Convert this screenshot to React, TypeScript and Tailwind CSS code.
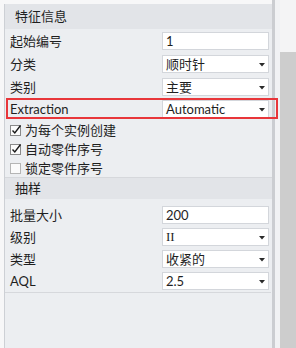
import React from "react";

const FONT = { fontFamily: 'Lato, "Noto Sans CJK SC", sans-serif' };

function Arrow() {
  return (
    <svg width="6" height="4" viewBox="0 0 6 4" className="absolute right-[3px] top-[7px]">
      <path d="M0 0 L6 0 L3 3.5 Z" fill="#2a2a2a" />
    </svg>
  );
}

function Field({ value, select, serif }: { value: string; select?: boolean; serif?: boolean }) {
  return (
    <div
      className="relative w-[107px] h-[18px] bg-white border border-[#d3d6db] pl-[3px] text-[13px] leading-[16px] text-[#1f1f1f]"
      style={serif ? { fontFamily: '"Liberation Serif", serif' } : undefined}
    >
      {value}
      {select && <Arrow />}
    </div>
  );
}

function Row({ label, value, select, serif, h }: { label: string; value: string; select?: boolean; serif?: boolean; h: string }) {
  return (
    <div className={`flex items-start ${h} pt-[3px]`}>
      <div className="w-[157px] pl-[5px] text-[13px] leading-[18px] text-[#1f1f1f]">{label}</div>
      <Field value={value} select={select} serif={serif} />
    </div>
  );
}

function Check({ checked }: { checked: boolean }) {
  return (
    <svg width="12" height="12" viewBox="0 0 12 12" className="shrink-0">
      <rect x="0.5" y="1.5" width="10" height="10" fill="#fbfbfb" stroke={checked ? "#8a8a8a" : "#b5b5b5"} />
      {checked && <path d="M2.5 6.5 L4.8 9 L10.5 1.5" fill="none" stroke="#1a1a1a" strokeWidth="1.4" />}
    </svg>
  );
}

function CheckRow({ label, checked }: { label: string; checked: boolean }) {
  return (
    <div className="flex items-center h-[19px] pl-[5px] gap-[3px] text-[13px] text-[#1f1f1f]">
      <Check checked={checked} />
      <span className="leading-[18px]">{label}</span>
    </div>
  );
}

export default function App() {
  return (
    <div className="w-[296px] h-[348px] flex bg-[#f6f6f7] overflow-hidden" style={FONT}>
      <div className="w-[272px] h-full pt-[4px] pl-[4px] bg-[#f7f7f8]">
        <div className="h-full border-l border-[#cdd0d5] bg-[#eceef1] flex flex-col">
          <div className="h-[25px] bg-[#e2e4e8] pl-[10px] text-[13px] leading-[24px] text-[#1f1f1f]">特征信息</div>
          <Row h="h-[23px]" label="起始编号" value="1" />
          <Row h="h-[23px]" label="分类" value="顺时针" select />
          <Row h="h-[23px]" label="类别" value="主要" select />
          <div className="relative flex items-start h-[22px] pt-[2px]">
            <div className="w-[157px] pl-[5px] text-[13px] leading-[18px] text-[#1f1f1f]">Extraction</div>
            <Field value="Automatic" select />
            <div className="absolute left-[1px] top-0 w-[272px] h-[21px] border-2 border-[#e8363a]" />
          </div>
          <CheckRow label="为每个实例创建" checked />
          <CheckRow label="自动零件序号" checked />
          <CheckRow label="锁定零件序号" checked={false} />
          <div className="border-t border-[#d6d8dc] h-[22px] bg-[#e2e4e8] pl-[10px] text-[13px] leading-[21px] text-[#1f1f1f]">抽样</div>
          <div className="h-[4px]" />
          <Row h="h-[22px]" label="批量大小" value="200" />
          <Row h="h-[22px]" label="级别" value="II" select serif />
          <Row h="h-[22px]" label="类型" value="收紧的" select />
          <Row h="h-[22px]" label="AQL" value="2.5" select />
          <div className="h-[2px] border-b border-[#d6d8dc] w-[266px]" />
          <div className="flex-1" />
        </div>
      </div>
      <div className="w-[3px] h-full bg-[#cbcdd1]" />
      <div className="w-[5px] h-full bg-[#f1f2f4]" />
      <div className="flex-1 flex flex-col">
        <div className="h-[52px] bg-[#f4f4f5]" />
        <div className="flex-1 bg-[#cdcdcd]" />
      </div>
    </div>
  );
}
